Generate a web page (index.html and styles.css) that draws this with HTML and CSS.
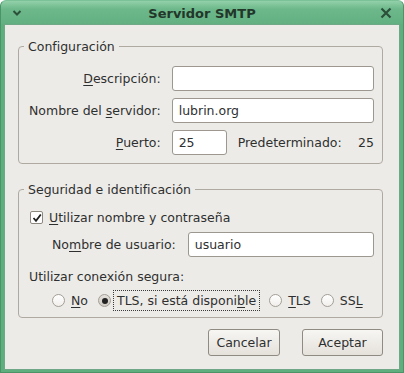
FILE: index.html
```html
<!DOCTYPE html>
<html lang="es">
<head>
  <meta charset="UTF-8" />
  <title>Servidor SMTP</title>
  <link rel="stylesheet" href="styles.css">
</head>
<body>

<div class="window">
  <div class="titlebar">
    <svg class="menu-icon" width="10" height="8" viewBox="0 0 10 8">
      <path d="M1.5 2 L5 5.5 L8.5 2" fill="none" stroke="#2c4f3a" stroke-width="2"/>
    </svg>
    <div class="title">Servidor SMTP</div>
    <svg class="close-icon" width="12" height="12" viewBox="0 0 12 12">
      <path d="M1.5 1.5 L10.5 10.5 M10.5 1.5 L1.5 10.5" stroke="#2c4f3a" stroke-width="2.2"/>
    </svg>
  </div>

  <div class="content">
    <fieldset class="group">
      <legend>Configuración</legend>
      <div class="form-grid">
        <label for="desc"><u>D</u>escripción:</label>
        <input type="text" id="desc" value="">

        <label for="server">Nombre del <u>s</u>ervidor:</label>
        <input type="text" id="server" value="lubrin.org">

        <label for="port"><u>P</u>uerto:</label>
        <div class="port-row">
          <input type="text" id="port" class="port" value="25">
          <span class="default-label">Predeterminado:</span>
          <span class="default-value">25</span>
        </div>
      </div>
    </fieldset>

    <fieldset class="group security">
      <legend>Seguridad e identificación</legend>
      <div class="check-row">
        <span class="checkbox checked">
          <svg width="10" height="10" viewBox="0 0 10 10">
            <path d="M1.5 5 L4 7.8 L8.8 1.5" fill="none" stroke="#1e1e1e" stroke-width="1.8"/>
          </svg>
        </span>
        <span><u>U</u>tilizar nombre y contraseña</span>
      </div>
      <div class="user-row">
        <label for="user">No<u>m</u>bre de usuario:</label>
        <input type="text" id="user" value="usuario">
      </div>
      <div class="secure-label">Utilizar conexión segura:</div>
      <div class="radio-row">
        <span class="radio-item"><span class="radio"></span><span><u>N</u>o</span></span>
        <span class="radio-item"><span class="radio selected"></span><span class="focused">TLS, si está disponi<u>b</u>le</span></span>
        <span class="radio-item"><span class="radio"></span><span><u>T</u>LS</span></span>
        <span class="radio-item"><span class="radio"></span><span>SS<u>L</u></span></span>
      </div>
    </fieldset>

    <div class="buttons">
      <button class="btn cancel">Cancelar</button>
      <button class="btn accept">Aceptar</button>
    </div>
  </div>
</div>

</body>
</html>
```

FILE: styles.css
```css
html, body {
  margin: 0;
  padding: 0;
  background: #ffffff;
}
body {
  font-family: "DejaVu Sans", sans-serif;
  font-size: 12.5px;
  color: #2e3030;
}
u { text-decoration-thickness: 1px; text-underline-offset: 2px; }

.window {
  width: 404px;
  height: 373px;
  display: flex;
  flex-direction: column;
  background: #5fae7e;
  border-radius: 6px 6px 0 0;
  box-sizing: border-box;
  border: 1px solid #4a9468;
  border-top-color: #7cc299;
  overflow: hidden;
}
.titlebar {
  height: 23px;
  display: flex;
  align-items: center;
  position: relative;
  background: linear-gradient(to bottom, #93d0a9 0%, #6db88b 35%, #62b081 100%);
}
.menu-icon { position: absolute; left: 11px; top: 8px; }
.close-icon { position: absolute; right: 11px; top: 6px; }
.title {
  flex: 1;
  text-align: center;
  font-weight: bold;
  font-size: 13px;
  color: #22362a;
  padding-top: 1px;
}

.content {
  flex: 1;
  margin: 0 3px 2px 3px;
  background: #edebe7;
  padding: 14px 16px 0 13px;
  box-sizing: border-box;
  border: 1px solid #6fa887;
}

.group {
  margin: 0;
  padding: 0 8px 8px 10px;
  border: 1px solid #aeaaa2;
  border-radius: 4px;
  min-width: 0;
}
.group legend {
  padding: 0 4px;
  margin-left: -5px;
}

.form-grid {
  display: grid;
  grid-template-columns: auto 1fr;
  column-gap: 11px;
  row-gap: 7px;
  align-items: center;
  padding-top: 12px;
}
.form-grid label { text-align: right; }

input[type="text"] {
  font-family: "DejaVu Sans", sans-serif;
  font-size: 12.5px;
  color: #2e3030;
  height: 25px;
  box-sizing: border-box;
  border: 1px solid #9c978f;
  border-radius: 3px;
  padding: 0 6px;
  background: #ffffff;
  width: 100%;
  outline: none;
}

.port-row {
  display: flex;
  align-items: center;
}
.port-row .port { width: 55px; }
.default-label { margin-left: 11px; }
.default-value { margin-left: auto; }

.security { margin-top: 18px; padding-bottom: 7px; }
.check-row {
  display: flex;
  align-items: center;
  gap: 6px;
  padding-top: 13px;
  margin-left: 1px;
}
.checkbox {
  width: 11px;
  height: 11px;
  border: 1px solid #8d887f;
  border-radius: 2px;
  background: #ffffff;
  display: flex;
  align-items: center;
  justify-content: center;
}
.user-row {
  display: flex;
  align-items: center;
  gap: 12px;
  margin-top: 7px;
  padding-left: 23px;
}
.user-row input { flex: 1; }
.secure-label { margin-top: 12px; }

.radio-row {
  display: flex;
  align-items: center;
  padding-left: 23px;
  margin-top: 7px;
}
.radio-item {
  display: flex;
  align-items: center;
  gap: 6px;
  margin-right: 10px;
}
.radio {
  width: 11px;
  height: 11px;
  border: 1px solid #a39e96;
  border-radius: 50%;
  background: linear-gradient(to bottom, #ffffff, #f1efec);
  position: relative;
}
.radio.selected {
  background: linear-gradient(to bottom, #e4e1dc, #cfcbc4);
}
.radio.selected::after {
  content: "";
  position: absolute;
  left: 2.5px;
  top: 2.5px;
  width: 6px;
  height: 6px;
  border-radius: 50%;
  background: #222222;
}
.focused {
  outline: 1px dotted #3a3a3a;
  padding: 2px 3px;
  margin-left: -3px;
}

.buttons {
  display: flex;
  justify-content: flex-end;
  gap: 22px;
  margin-top: 11px;
}
.btn {
  font-family: "DejaVu Sans", sans-serif;
  font-size: 12.5px;
  color: #2e3030;
  height: 27px;
  border: 1px solid #8f8a82;
  border-radius: 3px;
  background: linear-gradient(to bottom, #f7f6f3, #e5e1db);
  padding: 0;
}
.cancel { width: 72px; }
.accept { width: 81px; }
```
